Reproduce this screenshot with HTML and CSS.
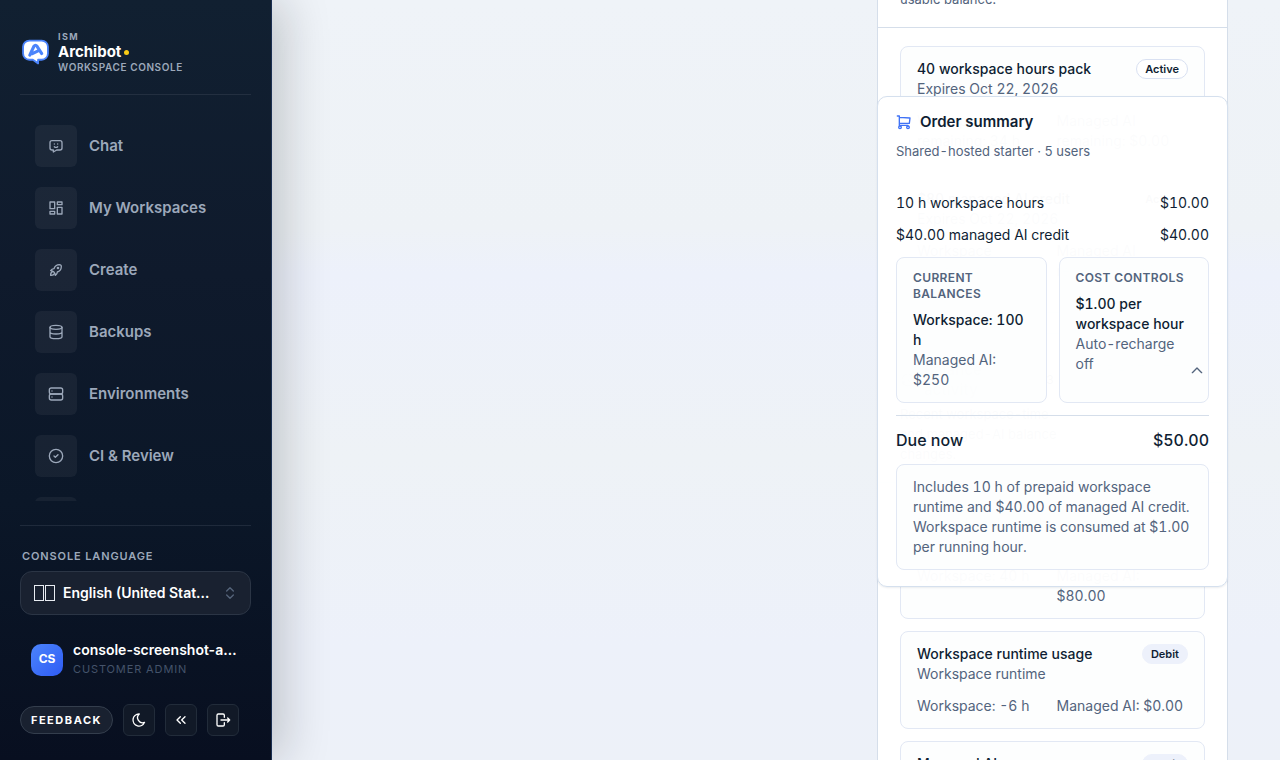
FILE: index.html
```html
<!DOCTYPE html>
<html lang="en">
<head>
<meta charset="utf-8">
<title>Archibot Workspace Console</title>
<link rel="stylesheet" href="styles.css">
</head>
<body>
<aside class="sidebar">
    <div class="brand">
        <svg class="logo" viewBox="0 0 28 26"><path d="M8 1.500h12a6 6 0 0 1 6 6v6.500a6 6 0 0 1-6 6h-3.500v3.500l-5-3.500H8a6 6 0 0 1-6-6V7.500a6 6 0 0 1 6-6z" fill="#fff" stroke="#4b84fb" stroke-width="1.800"/><path d="M8.500 15.500 12.500 7q1.500-2 3 0L20 14M11 14l6.500-3" fill="none" stroke="#4b84fb" stroke-width="3" stroke-linecap="round" stroke-linejoin="round"/></svg>
        <div class="brandText">
            <span class="org">ISM</span>
            <strong>Archibot<i class="dot"></i></strong>
            <span class="product">WORKSPACE CONSOLE</span>
        </div>
    </div>
    <nav>
        <a href="#"><span class="tile"><svg viewBox="0 0 24 24"><path d="M18 4a3 3 0 0 1 3 3v8a3 3 0 0 1-3 3h-5l-5 3v-3H6a3 3 0 0 1-3-3V7a3 3 0 0 1 3-3h12zM9.500 9h.01M14.500 9h.01M9.500 13a3.500 3.500 0 0 0 5 0"/></svg></span>Chat</a>
        <a href="#"><span class="tile"><svg viewBox="0 0 24 24"><path d="M3 3h7v10H3zM3 17h7v4H3zM14 11h7v10h-7zM14 3h7v4h-7z"/></svg></span>My Workspaces</a>
        <a href="#"><span class="tile"><svg viewBox="0 0 24 24"><path d="M4 13a8 8 0 0 1 7 7 6 6 0 0 0 3-5 9 9 0 0 0 6-8 3 3 0 0 0-3-3 9 9 0 0 0-8 6 6 6 0 0 0-5 3"/><path d="M7 14a6 6 0 0 0-3 6 6 6 0 0 0 6-3"/><circle cx="15" cy="9" r="1"/></svg></span>Create</a>
        <a href="#"><span class="tile"><svg viewBox="0 0 24 24"><ellipse cx="12" cy="5" rx="9" ry="3"/><path d="M3 5v14c0 1.700 4 3 9 3s9-1.300 9-3V5M3 12c0 1.700 4 3 9 3s9-1.300 9-3"/></svg></span>Backups</a>
        <a href="#"><span class="tile"><svg viewBox="0 0 24 24"><rect x="2" y="3" width="20" height="9" rx="3"/><rect x="2" y="12" width="20" height="9" rx="3"/><path d="M6 7.500v.01M6 16.500v.01"/></svg></span>Environments</a>
        <a href="#"><span class="tile"><svg viewBox="0 0 24 24"><circle cx="12" cy="12" r="10"/><path d="m9 12 2 2 4-4"/></svg></span>CI &amp; Review</a>
        <a href="#" aria-label="More"><span class="tile"></span></a>
    </nav>
    <div class="sideFoot">
        <span class="footLabel" id="langLabel">CONSOLE LANGUAGE</span>
        <button class="lang" type="button" aria-labelledby="langLabel langValue">
            <span class="flag"><i></i><i></i></span>
            <span class="langValue" id="langValue">English (United States)</span>
            <svg viewBox="0 0 24 24"><path d="m7 9 5-5 5 5M17 15l-5 5-5-5"/></svg>
        </button>
        <div class="user">
            <span class="avatar">CS</span>
            <div class="userText">
                <strong>console-screenshot-admin</strong>
                <span>CUSTOMER ADMIN</span>
            </div>
        </div>
        <div class="tools">
            <button class="feedback" type="button">FEEDBACK</button>
            <button class="tool" type="button" aria-label="Dark mode"><svg viewBox="0 0 24 24"><path d="M12 3h.400a7.500 7.500 0 0 0 7.900 12.500A9 9 0 1 1 12 3z"/></svg></button>
            <button class="tool" type="button" aria-label="Collapse sidebar"><svg viewBox="0 0 24 24"><path d="m11 7-5 5 5 5M18 7l-5 5 5 5"/></svg></button>
            <button class="tool" type="button" aria-label="Sign out"><svg viewBox="0 0 24 24"><path d="M14 8V5a2 2 0 0 0-2-2H5a2 2 0 0 0-2 2v14a2 2 0 0 0 2 2h7a2 2 0 0 0 2-2v-3M9 12h13M19 9l3 3-3 3"/></svg></button>
        </div>
    </div>
</aside>
<main>
    <div class="column">
        <section class="panel packs">
            <header><p>usable balance.</p></header>
            <div class="list">
                <article class="item">
                    <h3>40 workspace hours pack<span class="badge line">Active</span></h3>
                    <p>Expires Oct 22, 2026</p>
                    <div class="pair"><span>Workspace remaining: 34 h</span><span>Managed AI remaining: $0.00</span></div>
                </article>
                <article class="item">
                    <h3>$80 managed AI credit<span class="badge line">Active</span></h3>
                    <p>Expires Oct 22, 2026</p>
                    <div class="pair"><span>Workspace remaining: 0 h</span><span>Managed AI remaining: $69.00</span></div>
                </article>
            </div>
        </section>
        <section class="panel activity">
            <header>
                <div class="activityHead">
                    <svg viewBox="0 0 24 24"><path d="M12 8v4l2 2M3 11a9 9 0 1 1 .500 4M3 20v-5h5"/></svg>
                    <h2>Balance activity</h2>
                    <span class="count">3</span>
                    <button type="button">HIDE ACTIVITY<svg viewBox="0 0 24 24"><path d="m5 16 7-7 7 7"/></svg></button>
                </div>
                <p>Recent workspace-time and managed-AI balance changes.</p>
            </header>
            <div class="list">
                <article class="item">
                    <h3>Prepaid pack purchase<span class="badge">Credit</span></h3>
                    <p>Order fulfillment</p>
                    <div class="pair"><span>Workspace: 40 h</span><span>Managed AI: $80.00</span></div>
                </article>
                <article class="item">
                    <h3>Workspace runtime usage<span class="badge">Debit</span></h3>
                    <p>Workspace runtime</p>
                    <div class="pair"><span>Workspace: -6 h</span><span>Managed AI: $0.00</span></div>
                </article>
                <article class="item">
                    <h3>Managed AI<span class="badge">Debit</span></h3>
                </article>
            </div>
        </section>
        <section class="order">
            <h2><svg viewBox="0 0 24 24"><circle cx="6" cy="20" r="2"/><circle cx="18" cy="20" r="2"/><path d="M18 17H5V3H2M5 5l16 1-1 8H5"/></svg>Order summary</h2>
            <p class="plan">Shared-hosted starter · 5 users</p>
            <div class="row"><span>10 h workspace hours</span><span>$10.00</span></div>
            <div class="row"><span>$40.00 managed AI credit</span><span>$40.00</span></div>
            <div class="boxes">
                <div class="box"><h4>CURRENT BALANCES</h4><strong>Workspace: 100 h</strong><p>Managed AI: $250</p></div>
                <div class="box"><h4>COST CONTROLS</h4><strong>$1.00 per workspace hour</strong><p>Auto-recharge off</p></div>
            </div>
            <div class="due"><span>Due now</span><span>$50.00</span></div>
            <p class="box note">Includes 10 h of prepaid workspace runtime and $40.00 of managed AI credit. Workspace runtime is consumed at $1.00 per running hour.</p>
        </section>
    </div>
</main>
</body>
</html>
```
FILE: styles.css
```css
*{box-sizing:border-box;}
body,h2,h3,h4,p{margin:0;padding:0;}
body{display:flex;height:100vh;overflow:hidden;font:14px/20px Inter,"Liberation Sans",sans-serif;color:#0f1e33;background:linear-gradient(180deg,#eff3f8,#eef2f6 30%,#edf1fb 36%,#eef2f6 60%,#edf1fa 85%,#edf1f8);}
a{text-decoration:none;color:inherit;}
button{font:inherit;color:inherit;cursor:pointer;padding:0;}
svg{fill:none;stroke:currentColor;stroke-width:2;stroke-linecap:round;stroke-linejoin:round;flex:none;}

.sidebar{display:flex;flex-direction:column;flex:none;width:272px;padding:30px 20px 24px;color:#fff;border-right:1px solid #1b2f52;background:linear-gradient(180deg,#112031,#0f1a2c 36%,#0b1728 66%,#080f20);box-shadow:12px 0 44px rgba(15,20,24,.2);z-index:1;}
.brand{display:flex;align-items:center;gap:8px;padding:0 0 19px 1px;border-bottom:1px solid #232f40;}
.logo{width:29px;height:27px;}
.brandText{display:flex;flex-direction:column;font-weight:600;color:#9ca8ba;}
.brandText strong{font-size:15px;line-height:17px;font-weight:700;color:#fff;}
.org{font-size:9px;line-height:13px;font-weight:700;letter-spacing:.16em;}
.product{font-size:10px;line-height:15px;letter-spacing:.06em;}
.dot{display:inline-block;width:5px;height:5px;border-radius:50%;margin:0 0 2px 3px;background:#facc15;}
nav{flex:1;min-height:0;overflow:hidden;display:flex;flex-direction:column;gap:20px;padding:30px 15px 0;margin-bottom:24px;}
nav a{display:flex;align-items:center;gap:12px;font-size:15px;font-weight:600;color:#9ca8ba;}
.tile{display:flex;align-items:center;justify-content:center;width:42px;height:42px;border-radius:6px;background:rgba(255,255,255,.05);flex:none;}
.tile svg{width:16px;height:16px;}
.sideFoot{border-top:1px solid #1f2a3b;padding-top:20px;}
.footLabel{display:block;padding-left:2px;font-size:11px;font-weight:600;letter-spacing:.08em;color:#9ca8ba;}
.lang{display:flex;align-items:center;width:100%;height:44px;margin-top:5px;padding:0 12px 0 13px;border:1px solid #2b3545;border-radius:12px;background:#192130;}
.flag{display:flex;gap:1px;}
.flag i{width:10px;height:16px;border:1px solid #e8ecf2;}
.langValue{flex:1;min-width:0;margin:0 10px 0 8px;text-align:left;font-weight:600;white-space:nowrap;overflow:hidden;text-overflow:ellipsis;}
.lang svg{width:16px;height:16px;color:#56657b;}
.user{display:flex;align-items:center;gap:10px;padding:25px 11px 26px;}
.avatar{width:32px;height:32px;border-radius:10px;background:linear-gradient(135deg,#4b84fb,#2f5cf5);text-align:center;line-height:30px;font-size:12px;font-weight:700;margin-top:2px;flex:none;}
.userText{min-width:0;}
.userText strong{display:block;font-weight:600;overflow:hidden;text-overflow:ellipsis;white-space:nowrap;}
.userText span{display:block;font-size:11px;line-height:18px;letter-spacing:.08em;color:#44536a;}
.tools{display:flex;align-items:center;gap:10px;}
.feedback{width:93px;height:28px;border:1px solid #343e4d;border-radius:14px;background:#192130;font-size:11px;font-weight:700;letter-spacing:.14em;}
.tool{display:flex;align-items:center;justify-content:center;width:32px;height:32px;border:1px solid #222c3a;border-radius:6px;background:#111927;}
.tool svg{width:16px;height:16px;}

main{flex:1;min-width:0;display:flex;justify-content:flex-end;padding-right:52px;font-variant-numeric:tabular-nums;}
.column{position:relative;width:351px;}
.panel{border:1px solid #d5deea;border-radius:8px;background:#fff;}
.packs{margin-top:-11px;border-top:0;border-radius:0 0 8px 8px;}
.panel header{padding:0 22px 18px;border-bottom:1px solid #d5deea;}
.panel header p{font-size:13px;color:#53647d;}
.list{display:flex;flex-direction:column;gap:12px;padding:18px 22px;}
.item{padding:12px 16px;border:1px solid #e2e8f4;border-radius:8px;background:#fdfefe;color:#53647d;}
.item h3{display:flex;justify-content:space-between;align-items:center;font-size:14px;font-weight:500;color:#0f1e33;}
.badge{padding:0 8px;border:1px solid #edf1fb;border-radius:10px;background:#edf1fb;font-size:11px;line-height:18px;font-weight:600;}
.line{background:#fff;border-color:#d9e1f2;}
.pair{display:grid;grid-template-columns:1fr 1fr;gap:8px;margin-top:12px;}
.activity{margin-top:20px;}
.panel.activity header{padding-top:26px;}
.activityHead{display:flex;align-items:center;gap:8px;margin-bottom:4px;}
.activityHead svg{width:16px;height:16px;}
.activityHead h2{width:90px;font-size:15px;line-height:20px;font-weight:600;}
.activity header p{width:170px;}
.count{margin-left:auto;font-size:12px;}
.activityHead button{display:flex;align-items:center;align-self:flex-start;gap:8px;margin-left:20px;border:0;background:none;font-size:12px;line-height:20px;letter-spacing:.08em;white-space:nowrap;color:#53647d;}
.activityHead button svg{position:relative;z-index:1;}

.order{position:absolute;top:96px;left:0;right:0;padding:15px 18px 16px;border:1px solid #d5e0ee;border-radius:10px;background:rgba(255,255,255,.98);box-shadow:0 1px 2px rgba(15,30,51,.08);}
.order h2{display:flex;align-items:center;gap:8px;font-size:15px;font-weight:600;}
.order h2 svg{width:16px;height:16px;color:#3f72f6;}
.plan{margin:9px 0 32px;font-size:13px;color:#53647d;}
.row{display:flex;justify-content:space-between;margin-bottom:12px;}
.boxes{display:grid;grid-template-columns:1fr 1fr;gap:12px;}
.box{padding:12px 16px;border:1px solid #e2e8f4;border-radius:8px;background:rgba(252,254,254,.8);color:#53647d;}
.box h4{margin-bottom:8px;font-size:12px;line-height:16px;font-weight:600;letter-spacing:.03em;}
.box strong{font-weight:500;color:#0f1e33;}
.due{display:flex;justify-content:space-between;margin-top:12px;padding:12px 0;border-top:1px solid #d5deea;font-size:16px;line-height:24px;font-weight:500;}
```
